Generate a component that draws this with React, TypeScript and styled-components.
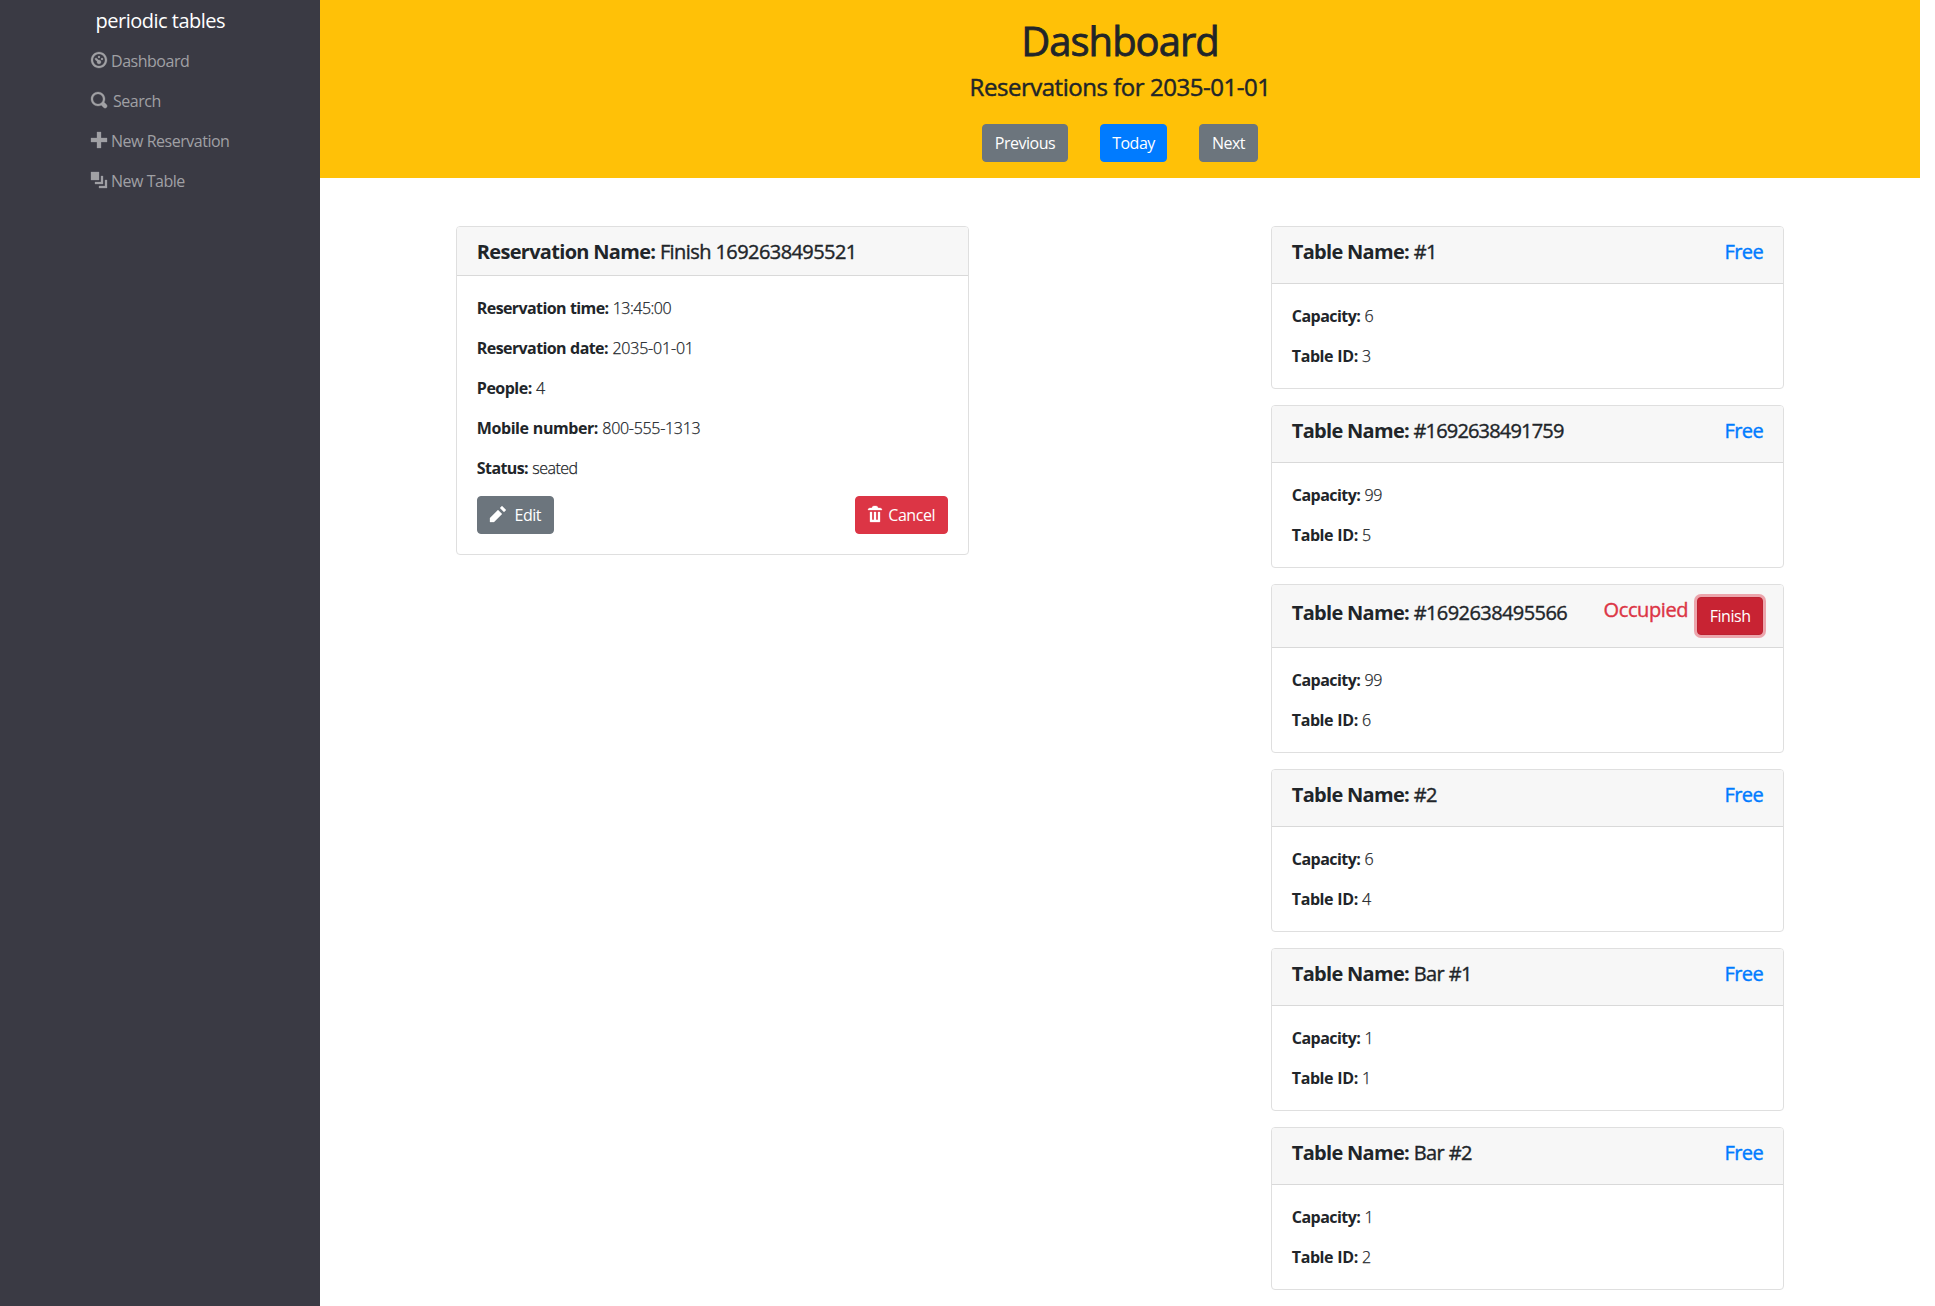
import React from "react";
import styled, { createGlobalStyle } from "styled-components";

const Global = createGlobalStyle`
  *, *::before, *::after { box-sizing: border-box; }
  body {
    margin: 0;
    background: #fff;
    color: #212529;
    font: 400 16px/24px "Segoe UI", "Open Sans", "Noto Sans", sans-serif;
    overflow: hidden;
  }
  h1, h4, h5, p { margin: 0; }
`;

const Shell = styled.div`
  display: grid;
  grid-template-columns: 320px 1600px;
  min-height: 1306px;
`;
const Sidebar = styled.nav`
  background: #3a3a44;
  padding: 1px 0 0 90.5px;
`;
const Brand = styled.div`
  height: 40px;
  padding: 5px 0 5px 5px;
  font-size: 20px;
  line-height: 30px;
  letter-spacing: -0.5px;
  color: #fff;
`;
const NavItem = styled.a<{ $gap?: number }>`
  display: flex;
  height: 40px;
  padding: 8px 0;
  gap: ${(p) => p.$gap ?? 4.5}px;
  letter-spacing: -0.48px;
  color: #a0a0a4;
  svg { margin-top: 3px; }
`;
const Main = styled.main`
  display: flex;
  flex-direction: column;
`;
const Banner = styled.header`
  display: flex;
  flex-direction: column;
  align-items: center;
  height: 178px;
  padding-top: 17px;
  background: #ffc107;
`;
const Title = styled.h1`
  font-size: 40px;
  line-height: 48px;
  font-weight: 500;
  -webkit-text-stroke: 0.8px currentColor;
  letter-spacing: -1px;
  margin-bottom: 7px;
`;
const Subtitle = styled.h4`
  font-size: 24px;
  line-height: 29px;
  font-weight: 500;
  -webkit-text-stroke: 0.45px currentColor;
  letter-spacing: -0.47px;
  margin-bottom: 23px;
`;
const Pager = styled.div`
  display: flex;
  gap: 32px;
`;
const tones = { secondary: "#6c757d", primary: "#007bff", danger: "#dc3545", active: "#c82333" };
const Button = styled.button<{ $tone: keyof typeof tones; $w: number; $gap?: number }>`
  display: flex;
  justify-content: center;
  gap: ${(p) => p.$gap ?? 0}px;
  width: ${(p) => p.$w}px;
  height: 38px;
  padding: 6px 0;
  border: 1px solid ${(p) => (p.$tone === "active" ? "#bd2130" : tones[p.$tone])};
  border-radius: 4px;
  background: ${(p) => tones[p.$tone]};
  box-shadow: ${(p) => (p.$tone === "active" ? "0 0 0 3px rgba(225, 83, 97, 0.5)" : "none")};
  color: #fff;
  font: inherit;
  letter-spacing: -0.48px;
  white-space: nowrap;
  svg { margin-top: 3px; }
`;
const Board = styled.section`
  display: grid;
  grid-template-columns: 513.33px 513.33px;
  column-gap: 301.67px;
  align-items: start;
  padding: 48px 0 0 135.83px;
`;
const Stack = styled.div`
  display: flex;
  flex-direction: column;
  gap: 16px;
`;
const Card = styled.article`
  border: 1px solid #dfdfdf;
  border-radius: 4px;
  overflow: hidden;
`;
const CardHead = styled.div`
  display: flex;
  justify-content: space-between;
  align-items: center;
  padding: 12px 20px;
  background: #f7f7f7;
  border-bottom: 1px solid #d9d9d9;
`;
const CardTitle = styled.h5<{ $mb?: number; $track?: number }>`
  height: 24px;
  padding-top: 1px;
  font-size: 20px;
  line-height: 24px;
  font-weight: 500;
  -webkit-text-stroke: 0.4px currentColor;
  letter-spacing: ${(p) => p.$track ?? -0.58}px;
  margin-bottom: ${(p) => p.$mb ?? 0}px;
  b {
    font-weight: 700;
    letter-spacing: -0.7px;
    -webkit-text-stroke: 0;
  }
`;
const State = styled(CardTitle)<{ $busy?: boolean }>`
  color: ${(p) => (p.$busy ? "#dc3545" : "#007bff")};
`;
const StateGroup = styled.div`
  display: flex;
  align-items: flex-start;
  gap: 9px;
`;
const CardBody = styled.div`
  display: flex;
  flex-direction: column;
  gap: 16px;
  padding: 20px;
`;
const Field = styled.p<{ $label?: number; $value?: number }>`
  font-weight: 300;
  -webkit-text-stroke: 0.25px currentColor;
  letter-spacing: ${(p) => p.$value ?? -0.4}px;
  word-spacing: 0.5px;
  b {
    font-weight: 700;
    letter-spacing: ${(p) => p.$label ?? -0.55}px;
    -webkit-text-stroke: 0;
  }
`;
const Actions = styled.div`
  display: flex;
  justify-content: space-between;
`;

const paths = {
  dashboard:
    "M4 0c-2.2 0-4 1.8-4 4s1.8 4 4 4 4-1.8 4-4-1.8-4-4-4zm0 1c1.66 0 3 1.34 3 3s-1.34 3-3 3-3-1.34-3-3 1.34-3 3-3zm0 1c-.28 0-.5.22-.5.5s.22.5.5.5.5-.22.5-.5-.22-.5-.5-.5zm-1.66 1a.5.5 0 0 0-.19.84l.91.91c-.02.08-.06.16-.06.25 0 .55.45 1 1 1s1-.45 1-1-.45-1-1-1c-.09 0-.17.04-.25.06l-.91-.91a.5.5 0 0 0-.44-.16.5.5 0 0 0-.06 0zm3.16 0c-.28 0-.5.22-.5.5s.22.5.5.5.5-.22.5-.5-.22-.5-.5-.5z",
  search:
    "M3.5 0c-1.93 0-3.5 1.57-3.5 3.5s1.57 3.5 3.5 3.5c.59 0 1.17-.14 1.66-.41a1 1 0 0 0 .13.13l1 1a1.02 1.02 0 1 0 1.44-1.44l-1-1a1 1 0 0 0-.16-.13c.27-.49.44-1.06.44-1.66 0-1.93-1.55-3.5-3.5-3.5zm0 1c1.39 0 2.5 1.11 2.5 2.5 0 .66-.24 1.27-.66 1.72l-.03.03a1 1 0 0 0-.13.13c-.44.4-1.04.63-1.69.63-1.39 0-2.5-1.11-2.5-2.5s1.11-2.5 2.5-2.5z",
  plus: "M3 0v3h-3v2h3v3h2v-3h3v-2h-3v-3h-2z",
  layers: "M0 0v4h4v-4h-4zm5 2v3h-3v1h4v-4h-1zm2 2v3h-3v1h4v-4h-1z",
  pencil: "M6 0l-1 1 2 2 1-1-2-2zm-2 2l-4 4v2h2l4-4-2-2z",
  trash:
    "M3 0c-.55 0-1 .45-1 1h-1c-.55 0-1 .45-1 1h7c0-.55-.45-1-1-1h-1c0-.55-.45-1-1-1h-1zm-2 3v4.81c0 .11.08.19.19.19h4.63c.11 0 .19-.08.19-.19v-4.81h-1v3.5c0 .28-.22.5-.5.5s-.5-.22-.5-.5v-3.5h-1v3.5c0 .28-.22.5-.5.5s-.5-.22-.5-.5v-3.5h-1z",
};
const NavIcon = styled.svg`
  stroke: currentColor;
  stroke-width: 0.15;
  overflow: visible;
`;
const Icon = ({ name, width = 16 }: { name: keyof typeof paths; width?: number }) => (
  <NavIcon width={width} height={16} viewBox={`0 0 ${width / 2} 8`} fill="currentColor">
    <path d={paths[name]} />
  </NavIcon>
);

const fields = [
  { label: "Reservation time:", value: "13:45:00", labelTrack: -0.6, valueTrack: -0.5 },
  { label: "Reservation date:", value: "2035-01-01", labelTrack: -0.59, valueTrack: -0.2 },
  { label: "People:", value: "4", labelTrack: -0.5 },
  { label: "Mobile number:", value: "800-555-1313", labelTrack: -0.43, valueTrack: -0.3 },
  { label: "Status:", value: "seated", labelTrack: -0.6, valueTrack: -0.5 },
];
const tables = [
  { name: "#1", capacity: 6, id: 3 },
  { name: "#1692638491759", capacity: 99, id: 5, track: -0.82 },
  { name: "#1692638495566", capacity: 99, id: 6, busy: true },
  { name: "#2", capacity: 6, id: 4 },
  { name: "Bar #1", capacity: 1, id: 1 },
  { name: "Bar #2", capacity: 1, id: 2 },
];

export default function App() {
  return (
    <>
      <Global />
      <Shell>
        <Sidebar>
          <Brand>periodic tables</Brand>
          <NavItem><Icon name="dashboard" />Dashboard</NavItem>
          <NavItem $gap={6.5}><Icon name="search" />Search</NavItem>
          <NavItem><Icon name="plus" />New Reservation</NavItem>
          <NavItem><Icon name="layers" />New Table</NavItem>
        </Sidebar>
        <Main>
          <Banner>
            <Title>Dashboard</Title>
            <Subtitle>Reservations for 2035-01-01</Subtitle>
            <Pager>
              <Button $tone="secondary" $w={86}>Previous</Button>
              <Button $tone="primary" $w={67}>Today</Button>
              <Button $tone="secondary" $w={59}>Next</Button>
            </Pager>
          </Banner>
          <Board>
            <Card>
              <CardHead>
                <CardTitle><b>Reservation Name:</b> Finish 1692638495521</CardTitle>
              </CardHead>
              <CardBody>
                {fields.map((f) => (
                  <Field key={f.label} $label={f.labelTrack} $value={f.valueTrack}>
                    <b>{f.label}</b> {f.value}
                  </Field>
                ))}
                <Actions>
                  <Button $tone="secondary" $w={77} $gap={9}><Icon name="pencil" />Edit</Button>
                  <Button $tone="danger" $w={93} $gap={6}><Icon name="trash" width={14} />Cancel</Button>
                </Actions>
              </CardBody>
            </Card>
            <Stack>
              {tables.map((t) => (
                <Card key={t.id}>
                  <CardHead>
                    <CardTitle $mb={8} $track={t.track}><b>Table Name:</b> {t.name}</CardTitle>
                    {t.busy ? (
                      <StateGroup>
                        <State $busy $track={-0.4}>Occupied</State>
                        <Button $tone="active" $w={66}>Finish</Button>
                      </StateGroup>
                    ) : (
                      <State $mb={8}>Free</State>
                    )}
                  </CardHead>
                  <CardBody>
                    <Field><b>Capacity:</b> {t.capacity}</Field>
                    <Field $label={-0.42}><b>Table ID:</b> {t.id}</Field>
                  </CardBody>
                </Card>
              ))}
            </Stack>
          </Board>
        </Main>
      </Shell>
    </>
  );
}
